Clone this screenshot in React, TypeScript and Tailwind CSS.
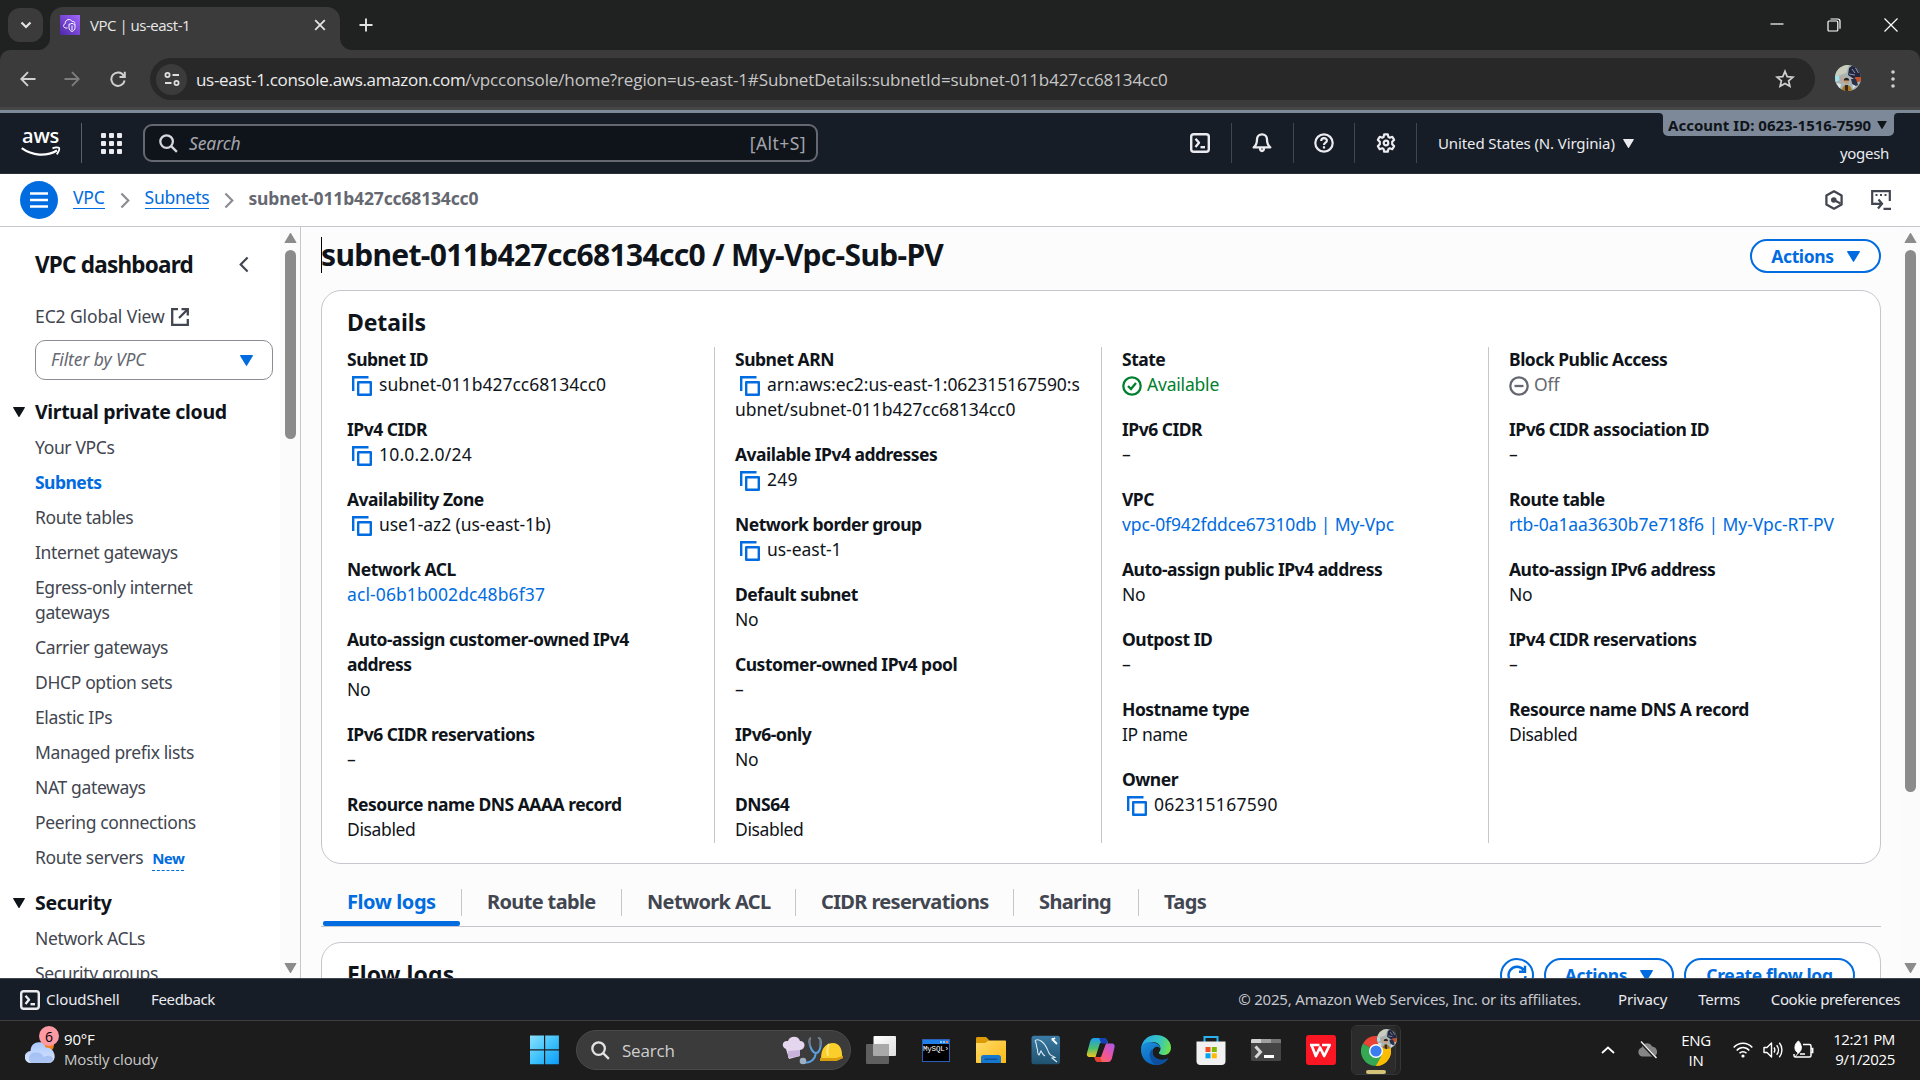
import React from "react";

const EMBER = "font-['Noto_Sans','Open_Sans',sans-serif]";
const SEGOE = "font-['Open_Sans','Noto_Sans',sans-serif]";

type SvgProps = { className?: string };

/* ---------- shared glyphs ---------- */

const Triangle = ({ className = "" }: SvgProps) => (
  <svg viewBox="0 0 12 10" className={className} fill="currentColor">
    <path d="M.6 0h10.8a.5.5 0 0 1 .45.75L6.5 9.7a.6.6 0 0 1-1 0L.15.75A.5.5 0 0 1 .6 0Z" />
  </svg>
);

const CopyIcon = () => (
  <svg viewBox="0 0 20 20" className="mr-[7px] ml-[5px] inline-block size-5 align-[-5px] text-[#006ce0]" fill="none" stroke="currentColor" strokeWidth="2.4">
    <path d="M1.2 15V1.2H16.5" />
    <rect x="6.2" y="6.2" width="12.6" height="12.6" strokeLinejoin="round" />
  </svg>
);

const ShellIcon = ({ className = "" }: SvgProps) => (
  <svg viewBox="0 0 20 20" className={className} fill="none" stroke="currentColor" strokeWidth="2.4">
    <rect x="1.2" y="1.2" width="17.6" height="17.6" rx="2.5" />
    <path d="M5.5 5.8 9 9.8l-3.500 4.200" strokeLinejoin="round" />
    <path d="M10.500 14.200h4.500" />
  </svg>
);

const Chevron = ({ className = "" }: SvgProps) => (
  <svg viewBox="0 0 10 18" className={className} fill="none" stroke="currentColor" strokeWidth="2.3">
    <path d="M1.200 1.500 8.500 9l-7.300 7.500" />
  </svg>
);

const Magnifier = ({ className = "" }: SvgProps) => (
  <svg viewBox="0 0 20 20" className={className} fill="none" stroke="currentColor" strokeWidth="2.4">
    <circle cx="8" cy="8" r="6.600" />
    <path d="m12.800 12.800 6 6" />
  </svg>
);

/* ---------- browser chrome ---------- */

const VpcFavicon = () => (
  <svg viewBox="0 0 20 20" className="size-5">
    <defs>
      <linearGradient id="vpc" x1="0" y1="1" x2="1" y2="0">
        <stop offset="0" stopColor="#4d27a8" />
        <stop offset="1" stopColor="#a166ff" />
      </linearGradient>
    </defs>
    <rect width="20" height="20" fill="url(#vpc)" />
    <path d="M7.500 13H5.700C3.300 12.700 2.700 9.600 5.200 8.800 4.800 4.300 10.800 3 12.200 6.500c1.600-.5 2.600.5 2.700 1.800" fill="none" stroke="#fff" strokeWidth="1" />
    <path d="M9 9.200c1.300 0 2.300-.4 3-1 .700.6 1.700 1 3 1v3.300c0 2-1.200 3.200-3 4-1.800-.8-3-2-3-4ZM12 10.500v4.500" fill="none" stroke="#fff" strokeWidth="1" />
  </svg>
);

const Avatar = ({ className = "" }: SvgProps) => (
  <svg viewBox="0 0 26 26" className={className}>
    <defs>
      <clipPath id="av"><circle cx="13" cy="13" r="13" /></clipPath>
    </defs>
    <g clipPath="url(#av)">
      <rect width="26" height="26" fill="#a9b4b4" />
      <path d="M0 0h14l-3 8-11 4Z" fill="#c9cdbd" />
      <path d="M0 11h4l1 4-5 2Z" fill="#9fe3ee" />
      <path d="M4 13l4-3 2 6-4 3Z" fill="#b9a9a0" />
      <path d="M14 3l4-3 8 4v8l-7 2-6-4Z" fill="#23263f" />
      <path d="M17 4l3 4M20.500 3l3 5M14 9l6 1" stroke="#8d96ad" strokeWidth="1" />
      <path d="M20 12h6v4l-5 2Z" fill="#c8502a" />
      <path d="M16 14l5 0 2 6-5 2Z" fill="#28304a" />
      <circle cx="11.500" cy="16" r="2.600" fill="#c99b70" />
      <path d="M8.800 15.500c0-3.600 5.400-3.600 5.400 0Z" fill="#2b2320" />
      <path d="M7 26c0-8 9-8 10 0Z" fill="#a87520" />
      <path d="M10 20h3v6h-3Z" fill="#3a2a1c" />
      <path d="M1 18l5 1-1 5Z" fill="#dfe6ea" />
      <path d="M17 19l4 2-3 3Z" fill="#d9dde0" />
    </g>
  </svg>
);

const TabStrip = () => (
  <div className="flex h-[50px] items-start bg-[#202221] text-[#e3e3e3]">
    <div className="mt-2 ml-2 grid h-[34px] w-[35px] place-items-center rounded-[12px] bg-[#3b3b3b]">
      <svg viewBox="0 0 12 8" className="h-2 w-3" fill="none" stroke="currentColor" strokeWidth="2.200"><path d="m1.500 1.500 4.500 4.500 4.500-4.500" /></svg>
    </div>
    <div className="relative mt-[7px] ml-[7px] flex h-[43px] w-[290px] items-start rounded-t-[13px] bg-[#3b3b3b] pt-2 pl-[10px]">
      <svg viewBox="0 0 12 12" className="absolute bottom-0 -left-3 size-3" fill="#3b3b3b"><path d="M12 0v12H0A12 12 0 0 0 12 0Z" /></svg>
      <svg viewBox="0 0 12 12" className="absolute -right-3 bottom-0 size-3" fill="#3b3b3b"><path d="M0 0v12h12A12 12 0 0 1 0 0Z" /></svg>
      <VpcFavicon />
      <span className="ml-[10px] w-[215px] text-[15px] leading-5 tracking-[-0.48px] text-[#e8e8e8]">VPC | us-east-1</span>
      <svg viewBox="0 0 12 12" className="mt-1 ml-[9px] size-3" fill="none" stroke="currentColor" strokeWidth="1.800"><path d="m1.200 1.200 9.600 9.600M10.800 1.200l-9.600 9.600" /></svg>
    </div>
    <svg viewBox="0 0 14 14" className="mt-[18px] ml-[19px] size-[14px]" fill="none" stroke="currentColor" strokeWidth="1.900"><path d="M7 .5v13M.5 7h13" /></svg>
    <div className="mr-[22px] ml-auto flex gap-[43px] pt-[18px] text-white">
      <svg viewBox="0 0 14 14" className="size-[14px]" fill="none" stroke="currentColor" strokeWidth="1.200"><path d="M.5 6h13" /></svg>
      <svg viewBox="0 0 14 14" className="size-[14px]" fill="none" stroke="currentColor" strokeWidth="1.200"><rect x="1" y="3" width="9.800" height="10" rx="1" /><path d="M3.500 1h7.300a2.200 2.200 0 0 1 2.200 2.200v7.500" /></svg>
      <svg viewBox="0 0 14 14" className="size-[14px]" fill="none" stroke="currentColor" strokeWidth="1.200"><path d="m.5.500 13 13M13.500.500l-13 13" /></svg>
    </div>
  </div>
);

const Toolbar = () => (
  <div className="bg-[#202221]">
    <div className="flex h-[57px] items-start rounded-t-[10px] bg-[#3b3b3b] pt-2 text-[#d0d0d0]">
      <svg viewBox="0 0 16 16" className="mt-[13px] ml-5 size-4" fill="none" stroke="currentColor" strokeWidth="1.900"><path d="M15.500 8H1.500M8 1.200 1.300 8 8 14.800" /></svg>
      <svg viewBox="0 0 16 16" className="mt-[13px] ml-7 size-4 text-[#7d7d7d]" fill="none" stroke="currentColor" strokeWidth="1.900"><path d="M.5 8h14M8 1.200 14.700 8 8 14.800" /></svg>
      <svg viewBox="0 0 16 16" className="mt-[13px] ml-[30px] size-4" fill="none" stroke="currentColor" strokeWidth="2"><path d="M13.700 4.600A6.700 6.700 0 1 0 14.600 9.500M14.800.800v5.200H9.500" /></svg>
      <div className="ml-6 flex h-[42px] w-[1665px] items-center rounded-full bg-[#282828]">
        <div className="ml-[6px] grid size-[31px] place-items-center rounded-full bg-[#3b3b3b] text-[#dedede]">
          <svg viewBox="0 0 16 14" className="h-[14px] w-4" fill="none" stroke="currentColor" strokeWidth="1.800"><circle cx="3.500" cy="3" r="2.100" /><path d="M8.500 3h6.500M1 11h6.500" /><circle cx="12.500" cy="11" r="2.100" /></svg>
        </div>
        <span className="mt-px ml-[9px] flex-1 text-[17px] leading-6 tracking-[-0.12px] whitespace-nowrap text-[#c7c7c7]">
          <span className="tracking-[-0.31px] text-[#ececec]">us-east-1.console.aws.amazon.com</span>/vpcconsole/home?region=us-east-1#SubnetDetails:subnetId=subnet-011b427cc68134cc0
        </span>
        <svg viewBox="0 0 20 20" className="mr-5 size-5" fill="none" stroke="currentColor" strokeWidth="1.700"><path d="m10 2.300 2.200 5.300 5.800.5-4.400 3.700 1.300 5.500L10 14.400l-4.900 2.900 1.300-5.500L2 8.100l5.800-.5Z" /></svg>
      </div>
      <Avatar className="mt-[7px] ml-5 size-[26px]" />
      <svg viewBox="0 0 4 18" className="mt-3 ml-[30px] h-[18px] w-1" fill="currentColor"><circle cx="2" cy="2" r="1.800" /><circle cx="2" cy="9" r="1.800" /><circle cx="2" cy="16" r="1.800" /></svg>
    </div>
    <div className="h-[3px] bg-[#474747]" />
  </div>
);

/* ---------- AWS header ---------- */

const Divider = () => <div className="h-10 w-px bg-[#424650]" />;

const AwsHeader = () => (
  <div className="relative flex h-16 items-center border-t-[3px] border-b border-t-[#7d8998] border-b-[#2a2f3c] bg-[#161d26] text-[#ebebf0]">
    <div className="mt-px ml-[21px] flex w-10 flex-col text-white">
      <span className="-mt-px mb-px ml-px font-['Open_Sans',sans-serif] text-[20px] leading-[15px] font-semibold tracking-[-0.2px]">aws</span>
      <svg viewBox="0 0 40 12" className="mt-[2px] h-3 w-10" fill="none" stroke="currentColor" strokeWidth="2.200"><path d="M.7 2.200c10.500 7.600 24.500 8.600 35.300 2.300" /><path d="M31.500 2.400c3-1.500 6-1.200 6.600-.5.600.9-.200 4-2.400 6.400" strokeWidth="1.800" /></svg>
    </div>
    <div className="ml-5 h-10 w-px bg-[#5b5f69]" />
    <div className="ml-[19px] grid grid-cols-3 gap-[3px]">
      {Array.from({ length: 9 }, (_, i) => <i key={i} className="size-[5px] rounded-[1px] bg-[#ebebf0]" />)}
    </div>
    <div className="ml-[21px] flex h-[38px] w-[675px] items-center rounded-[9px] border-2 border-[#656871] bg-[#0f141a] pr-[10px] pl-[14px]">
      <Magnifier className="size-[19px] text-[#d6d6dc]" />
      <span className="ml-[11px] flex-1 text-[17.5px] tracking-[-0.1px] text-[#a4a4ad] italic">Search</span>
      <span className="text-[17.5px] tracking-[0.45px] text-[#a4a4ad]">[Alt+S]</span>
    </div>
    <div className="ml-auto flex w-[730px] items-center">
      <ShellIcon className="size-5" />
      <div className="ml-[21px]"><Divider /></div>
      <svg viewBox="0 0 20 20" className="ml-5 size-5" fill="none" stroke="currentColor" strokeWidth="2.300"><path d="M10 1.300c-3 0-5 2.300-5 5.200 0 4-1.300 6.200-3.300 7.900h16.600C16.300 12.700 15 10.500 15 6.500c0-2.900-2-5.200-5-5.200ZM8 14.800c0 4.300 4 4.300 4 0" strokeLinejoin="round" /></svg>
      <div className="ml-[21px]"><Divider /></div>
      <svg viewBox="0 0 20 20" className="ml-5 size-5" fill="none" stroke="currentColor" strokeWidth="2.200"><circle cx="10" cy="10" r="8.700" /><path d="M7.200 8c0-3.800 5.800-3.700 5.700-.300-.100 2-2.900 2-2.900 4.200M10 13.300v2.200" /></svg>
      <div className="ml-5"><Divider /></div>
      <svg viewBox="0 0 20 20" className="ml-[21px] size-5" fill="none" stroke="currentColor" strokeWidth="2.200"><path d="M8.200 1.300h3.600l.6 2.600 1.300.8 2.600-.9 1.800 3.100-1.900 1.900v2.400l1.900 1.900-1.800 3.100-2.600-.9-1.300.8-.6 2.600H8.200l-.6-2.600-1.300-.8-2.600.9-1.800-3.100 1.900-1.900V8.800L1.900 6.900l1.800-3.100 2.600.9 1.300-.8Z" strokeLinejoin="round" /><circle cx="10" cy="10" r="2.300" /></svg>
      <div className="ml-5"><Divider /></div>
      <span className="ml-[21px] w-[177px] text-[15px] tracking-[-0.12px] whitespace-nowrap">United States (N. Virginia)</span>
      <Triangle className="ml-2 h-[9px] w-[11px]" />
    </div>
    <div className="absolute top-0 right-[26px] flex h-[23px] w-[231px] items-center rounded-b-[5px] bg-[#7d8998] pl-[5px] text-[#0f141a]">
      <svg viewBox="0 0 4 4" className="absolute top-0 -left-1 size-1" fill="#7d8998"><path d="M0 0h4v4A4 4 0 0 0 0 0Z" /></svg>
      <svg viewBox="0 0 4 4" className="absolute top-0 -right-1 size-1" fill="#7d8998"><path d="M4 0H0v4A4 4 0 0 1 4 0Z" /></svg>
      <span className="w-[204px] text-[15px] leading-5 font-bold tracking-[0.02px] whitespace-nowrap">Account ID: 0623-1516-7590</span>
      <Triangle className="ml-[5px] h-2 w-[10px]" />
    </div>
    <span className="absolute top-[30px] right-[31px] text-[15px] leading-5 tracking-[-0.3px]">yogesh</span>
  </div>
);

const BreadcrumbBar = () => (
  <div className="flex h-[53px] items-center border-b border-[#c6c6cd] bg-white text-[17.5px] leading-5">
    <div className="ml-5 grid size-[38px] place-items-center rounded-full bg-[#006ce0] text-white">
      <svg viewBox="0 0 18 16" className="h-4 w-[18px]" fill="none" stroke="currentColor" strokeWidth="2.400"><path d="M0 1.500h18M0 8h18M0 14.500h18" /></svg>
    </div>
    <span className="mb-[3px] ml-[15px] border-b border-[#006ce0] pb-px leading-[19px] tracking-[-0.2px] text-[#006ce0]">VPC</span>
    <Chevron className="ml-[15px] h-[17px] w-[10px] text-[#8c8c94]" />
    <span className="mb-[3px] ml-[15px] border-b border-[#006ce0] pb-px leading-[19px] tracking-[-0.25px] text-[#006ce0]">Subnets</span>
    <Chevron className="ml-[15px] h-[17px] w-[10px] text-[#8c8c94]" />
    <span className="mb-1 ml-[14px] font-bold tracking-[-0.15px] text-[#656871]">subnet-011b427cc68134cc0</span>
    <svg viewBox="0 0 20 20" className="ml-auto size-5 text-[#424650]" fill="none" stroke="currentColor" strokeWidth="2.300"><path d="m10 1.300 7.600 4.300v8.800L10 18.700l-7.600-4.300V5.600Z" strokeLinejoin="round" /><path d="m10 10 6.500 3.500" strokeWidth="2" /><circle cx="9.800" cy="10" r="2.800" fill="currentColor" stroke="none" /></svg>
    <svg viewBox="0 0 20 20" className="mr-[29px] ml-[27px] size-5 text-[#424650]" fill="none" stroke="currentColor" strokeWidth="2.200"><path d="M5.500 13.800H1.200V1.200h17.600V11" /><path d="M4.500 5h2M9 5h2M13.500 5h2" /><path d="M3.500 13.800h7M7.500 9.500l3.500 4.300L7 18.500M12.500 18.800H20" /></svg>
  </div>
);

/* ---------- page body ---------- */

const Scrollbar = ({ thumb }: { thumb: string }) => (
  <div className="flex h-full w-5 shrink-0 flex-col items-center bg-[#fbfbfb] pt-[6px] pb-[5px] text-[#8b8b8b]">
    <Triangle className="h-[10px] w-[13px] rotate-180" />
    <div className={"mt-[7px] w-[11px] rounded-full bg-[#8b8b8b] " + thumb} />
    <Triangle className="mt-auto h-[10px] w-[13px]" />
  </div>
);

const vpcLinks = ["Your VPCs", "Subnets", "Route tables", "Internet gateways", "Egress-only internet gateways", "Carrier gateways", "DHCP option sets", "Elastic IPs", "Managed prefix lists", "NAT gateways", "Peering connections", "Route servers"];

const NavSection = ({ title, links, className = "" }: { title: string; links: string[]; className?: string }) => (
  <section className={className}>
    <div className="flex items-center">
      <Triangle className="ml-[13px] h-[10px] w-3 text-[#0f141a]" />
      <h3 className="ml-[10px] text-[19.5px] leading-[25px] font-bold tracking-[-0.34px] text-[#0f141a]">{title}</h3>
    </div>
    <ul className="mt-[11px] ml-[35px] flex w-[185px] flex-col gap-[10px]">
      {links.map((l) => (
        <li key={l} className={l === "Subnets" ? "font-bold tracking-[-0.55px] text-[#006ce0]" : "text-[#424650]"}>
          {l}
          {l === "Route servers" && <span className="ml-[9px] border-b border-dashed border-[#006ce0] pb-[2px] text-[15px] font-bold tracking-[-0.55px] text-[#006ce0]">New</span>}
        </li>
      ))}
    </ul>
  </section>
);

const Sidebar = () => (
  <aside className="flex w-[301px] shrink-0 border-r border-[#c6c6cd] bg-white text-[17.5px] leading-[25px] tracking-[-0.36px]">
    <div className="h-full w-[281px] overflow-hidden">
      <div className="mt-6 flex items-center pl-[35px]">
        <h2 className="w-[204px] text-[22.5px] leading-[27px] font-bold tracking-[-0.78px] text-[#0f141a]">VPC dashboard</h2>
        <Chevron className="h-[17px] w-[10px] rotate-180 text-[#424650]" />
      </div>
      <div className="mt-[26px] ml-[35px] flex items-center tracking-[-0.1px] text-[#424650]">
        EC2 Global View
        <svg viewBox="0 0 18 18" className="mt-px ml-[6px] size-[18px]" fill="none" stroke="currentColor" strokeWidth="2.300"><path d="M7 1.200H1.200v15.600h15.600V11M10.500 1.200h6.300v6.300M16.500 1.500 8 10" /></svg>
      </div>
      <div className="mt-[11px] ml-[35px] flex h-10 w-[238px] items-center rounded-[10px] border border-[#8c8c94] pr-[19px] pl-[15px]">
        <span className="-mt-px flex-1 tracking-[-0.1px] text-[#656871] italic">Filter by VPC</span>
        <Triangle className="h-[11px] w-[13px] text-[#006ce0]" />
      </div>
      <NavSection className="mt-[19px]" title="Virtual private cloud" links={vpcLinks} />
      <NavSection className="mt-[19px]" title="Security" links={["Network ACLs", "Security groups"]} />
    </div>
    <Scrollbar thumb="h-[189px]" />
  </aside>
);

type Item = { label: string; value: string; kind?: "copy" | "link" | "ok" | "off"; track?: string };

const columns: Item[][] = [
  [
    { label: "Subnet ID", value: "subnet-011b427cc68134cc0", kind: "copy", track: "tracking-[0px]" },
    { label: "IPv4 CIDR", value: "10.0.2.0/24", kind: "copy", track: "tracking-[0.2px]" },
    { label: "Availability Zone", value: "use1-az2 (us-east-1b)", kind: "copy", track: "tracking-[-0.08px]" },
    { label: "Network ACL", value: "acl-06b1b002dc48b6f37", kind: "link", track: "tracking-[0.1px]" },
    { label: "Auto-assign customer-owned IPv4 address", value: "No" },
    { label: "IPv6 CIDR reservations", value: "–" },
    { label: "Resource name DNS AAAA record", value: "Disabled" },
  ],
  [
    { label: "Subnet ARN", value: "arn:aws:ec2:us-east-1:062315167590:subnet/subnet-011b427cc68134cc0", kind: "copy", track: "tracking-[-0.06px]" },
    { label: "Available IPv4 addresses", value: "249", kind: "copy", track: "tracking-[0.25px]" },
    { label: "Network border group", value: "us-east-1", kind: "copy", track: "tracking-[-0.04px]" },
    { label: "Default subnet", value: "No" },
    { label: "Customer-owned IPv4 pool", value: "–" },
    { label: "IPv6-only", value: "No" },
    { label: "DNS64", value: "Disabled" },
  ],
  [
    { label: "State", value: "Available", kind: "ok", track: "tracking-[-0.2px]" },
    { label: "IPv6 CIDR", value: "–" },
    { label: "VPC", value: "vpc-0f942fddce67310db | My-Vpc", kind: "link", track: "tracking-[-0.13px]" },
    { label: "Auto-assign public IPv4 address", value: "No" },
    { label: "Outpost ID", value: "–" },
    { label: "Hostname type", value: "IP name" },
    { label: "Owner", value: "062315167590", kind: "copy", track: "tracking-[0.3px]" },
  ],
  [
    { label: "Block Public Access", value: "Off", kind: "off", track: "tracking-[-0.1px]" },
    { label: "IPv6 CIDR association ID", value: "–" },
    { label: "Route table", value: "rtb-0a1aa3630b7e718f6 | My-Vpc-RT-PV", kind: "link", track: "tracking-[-0.06px]" },
    { label: "Auto-assign IPv6 address", value: "No" },
    { label: "IPv4 CIDR reservations", value: "–" },
    { label: "Resource name DNS A record", value: "Disabled" },
  ],
];

const columnPadding = ["pr-10", "border-l pl-5 pr-5", "border-l pl-5 pr-5", "border-l pl-5"];

const valueColor = { copy: "text-[#0f141a]", link: "text-[#006ce0]", ok: "text-[#00802f]", off: "text-[#656871]" };

const Detail = ({ label, value, kind, track = "" }: Item) => (
  <div>
    <div className="font-bold tracking-[-0.5px]">{label}</div>
    <div className={"break-all " + track + " " + (kind ? valueColor[kind] : "")}>
      {kind === "copy" && <CopyIcon />}
      {kind === "ok" && (
        <svg viewBox="0 0 20 20" className="mr-[5px] inline-block size-5 align-[-5px]" fill="none" stroke="currentColor" strokeWidth="2.300"><circle cx="10" cy="10" r="8.700" /><path d="m6 10 3 3 5-6" /></svg>
      )}
      {kind === "off" && (
        <svg viewBox="0 0 20 20" className="mr-[5px] inline-block size-5 align-[-5px]" fill="none" stroke="currentColor" strokeWidth="2.300"><circle cx="10" cy="10" r="8.700" /><path d="M5.500 10h9" /></svg>
      )}
      {value}
    </div>
  </div>
);

const Pill = ({ children, className = "" }: { children: React.ReactNode; className?: string }) => (
  <div className={"flex h-[34px] items-center justify-center gap-[13px] rounded-[17px] border-2 border-[#006ce0] bg-white text-[17.5px] font-bold tracking-[-0.35px] text-[#006ce0] " + className}>{children}</div>
);

const tabs = [
  { name: "Flow logs", w: "w-[141px]" },
  { name: "Route table", w: "w-[160px]" },
  { name: "Network ACL", w: "w-[174px]" },
  { name: "CIDR reservations", w: "w-[218px]" },
  { name: "Sharing", w: "w-[125px]" },
  { name: "Tags", w: "w-[96px]" },
];

const Main = () => (
  <main className="h-full w-[1599px] overflow-hidden bg-[#fcfcfd] pr-[19px] pl-5 text-[#0f141a]">
    <div className="flex h-[63px] items-start">
      <h1 className="mt-[10px] border-l border-black indent-[-1px] text-[30px] leading-9 font-bold tracking-[-0.68px] whitespace-nowrap">subnet-011b427cc68134cc0 / My-Vpc-Sub-PV</h1>
      <Pill className="mt-3 ml-auto w-[131px]">Actions <Triangle className="h-[11px] w-[13px]" /></Pill>
    </div>
    <section className="h-[574px] rounded-[20px] border border-[#c6c6cd] bg-white px-[25px] pt-[17px]">
      <h2 className="text-[23px] leading-7 font-bold tracking-[-0.1px]">Details</h2>
      <div className="mt-[11px] grid h-[496px] grid-cols-[367px_387px_387px_1fr] text-[17.5px] leading-[25px] tracking-[-0.36px]">
        {columns.map((items, i) => (
          <div key={i} className={"flex flex-col gap-5 border-[#c6c6cd] " + columnPadding[i]}>
            {items.map((it) => <Detail key={it.label} {...it} />)}
          </div>
        ))}
      </div>
    </section>
    <div className="flex h-[63px] items-start border-b border-[#c6c6cd] pt-[25px]">
      {tabs.map((t, i) => (
        <div key={t.name} className={"relative flex h-[27px] items-center pb-px text-[20px] font-bold whitespace-nowrap " + t.w + " " + (i < 5 ? "border-r border-[#c6c6cd] " : "") + (i === 0 ? "pl-[26px] tracking-[-0.42px] text-[#006ce0]" : "pl-[25px] tracking-[-0.64px] text-[#424650]")}>
          {t.name}
          {i === 0 && <span className="absolute top-[32px] left-[2px] h-[5px] w-[137px] rounded-[2px] bg-[#006ce0]" />}
        </div>
      ))}
    </div>
    <section className="mt-[15px] flex h-[120px] rounded-[20px] border border-[#c6c6cd] bg-white px-[25px]">
      <h2 className="mt-[17px] flex-1 text-[23px] leading-7 font-bold tracking-[0.1px]">Flow logs</h2>
      <div className="mt-[15px] flex gap-[10px]">
        <Pill className="w-[34px]">
          <svg viewBox="0 0 20 20" className="size-5 shrink-0" fill="none" stroke="currentColor" strokeWidth="2.400"><path d="M18.500 11a8.500 8.500 0 1 1-1.800-6M18 .8v6h-6" /></svg>
        </Pill>
        <Pill className="w-[130px]">Actions <Triangle className="h-[11px] w-[13px]" /></Pill>
        <Pill className="w-[171px]">Create flow log</Pill>
      </div>
    </section>
  </main>
);

const Footer = () => (
  <div className="flex h-[42px] items-center border-t border-[#424650] bg-[#161d26] pr-5 pl-5 text-[15px] tracking-[-0.35px] text-[#ebebf0]">
    <ShellIcon className="size-5" />
    <span className="ml-[6px] w-[105px] tracking-[-0.1px]">CloudShell</span>
    <span>Feedback</span>
    <span className="mr-[37px] ml-auto tracking-[-0.2px] text-[#c6c6cd]">© 2025, Amazon Web Services, Inc. or its affiliates.</span>
    <span className="mr-[31px] tracking-[-0.1px]">Privacy</span>
    <span className="mr-[31px]">Terms</span>
    <span>Cookie preferences</span>
  </div>
);

/* ---------- taskbar ---------- */

const Weather = () => (
  <div className="relative ml-[25px] h-[30px] w-[39px]">
    <svg viewBox="0 0 32 30" className="h-[30px] w-8">
      <defs><linearGradient id="cl" x1="0" y1="0" x2="0" y2="1"><stop offset="0" stopColor="#a9c8ff" /><stop offset="1" stopColor="#dbe6fb" /></linearGradient></defs>
      <circle cx="22" cy="10" r="7" fill="#f58220" />
      <path d="M6 28a6 6 0 0 1-.5-12C6 5 19 5 20.500 12.500 31 12 33 27 24 28Z" fill="url(#cl)" />
      <path d="M6 28a6 6 0 0 1 4-10.500c6-.5 8 3 9 4.500 5-3 10 0 9 3-.8 2-2 3-4 3Z" fill="#8fb0ee" opacity=".6" />
    </svg>
    <div className="absolute -top-[9px] left-[14px] grid size-5 place-items-center rounded-full bg-[#ff99a4] text-[14px] text-black">6</div>
  </div>
);

const SearchArt = () => (
  <svg viewBox="0 0 62 30" className="h-[30px] w-[62px]">
    <path d="M4 14C-1 12 0 5 6 6c2-6 11-5 12 0 6 0 6 8 0 9v6l-11 3Z" fill="#e4d6ee" />
    <path d="M6 16v7l12-2v-6" fill="#c9b3da" />
    <path d="M29 3c-4 1 0 15 5 15S41 2 36 3M34 18c-1 6-5 10-12 10" fill="none" stroke="#5aa0dd" strokeWidth="2" />
    <path d="M29 3c-3 0-1 7-.5 8M36 3c3 0 2.500 5 2 8" fill="none" stroke="#777" strokeWidth="1.600" />
    <circle cx="21" cy="26" r="3.300" fill="#9db0c4" />
    <path d="M39 24c0-11 5-16 12-16 6 0 9 5 9 12l1 3-7 3H38Z" fill="#fbcf2b" />
    <path d="M38 23h16l7-2v2l-7 3H38Z" fill="#d99d0d" />
    <path d="M47 9c-2 4-2 8-1 12" stroke="#ffe680" strokeWidth="2" fill="none" />
  </svg>
);

const appIcon = "h-[30px] w-[30px] shrink-0";

const WindowsLogo = () => (
  <svg viewBox="0 0 30 30" className={appIcon}>
    <defs><linearGradient id="win" x1="0" y1="0" x2="1" y2="1"><stop offset="0" stopColor="#8be0fc" /><stop offset=".5" stopColor="#41c3fb" /><stop offset="1" stopColor="#0a9bf8" /></linearGradient></defs>
    <path d="M0 .5H14v13.700H0ZM15.200.500h13.700v13.700H15.200ZM0 15.500H14v13.700H0ZM15.200 15.500h13.700v13.700H15.200Z" fill="url(#win)" />
  </svg>
);

const TaskView = () => (
  <svg viewBox="0 0 30 30" className={appIcon}>
    <defs><linearGradient id="tv" x1="0" y1="0" x2="1" y2="1"><stop offset="0" stopColor="#fff" /><stop offset="1" stopColor="#ddd" /></linearGradient></defs>
    <rect x="0" y="9" width="23" height="20" rx="1" fill="#5f5f5f" />
    <rect x="7.500" y="1" width="22.500" height="20" rx="1" fill="url(#tv)" />
    <path d="M7.500 9H23v12H7.500Z" fill="#a9a9a9" />
  </svg>
);

const MySqlShell = () => (
  <div className="h-[23px] w-[28px] overflow-hidden border border-[#2b5fb8] bg-black">
    <div className="flex h-1 justify-end gap-px bg-[#1f7fe8] pr-px">
      <i className="mt-px size-[2px] bg-[#8cc4ff]" /><i className="mt-px size-[2px] bg-[#8cc4ff]" /><i className="mt-px size-[2px] bg-[#ff7a4d]" />
    </div>
    <div className="font-['Liberation_Mono',monospace] text-[7.5px] leading-[11px] tracking-[-0.2px] text-white">MySQL›</div>
  </div>
);

const Folder = () => (
  <svg viewBox="0 0 30 30" className={appIcon}>
    <defs><linearGradient id="fo" x1="0" y1="0" x2="1" y2="1"><stop offset="0" stopColor="#ffdb6b" /><stop offset="1" stopColor="#fcb913" /></linearGradient></defs>
    <path d="M0 3.500C0 2.500.5 2 1.500 2h8.500l3 3v6H0Z" fill="#dd9a07" />
    <path d="M0 8h9l4-2.500h16c.7 0 1 .3 1 1V28H1c-.7 0-1-.5-1-1Z" fill="url(#fo)" />
    <path d="M5 28v-5.500c0-1.500 1-2.500 2.500-2.500h15c1.500 0 2.500 1 2.500 2.500V28Z" fill="#1478cf" />
    <path d="M8.500 24.200h13" stroke="#0b4f93" strokeWidth="1.400" />
  </svg>
);

const Workbench = () => (
  <svg viewBox="0 0 30 30" className={appIcon}>
    <defs><linearGradient id="wb" x1="0" y1="0" x2="0" y2="1"><stop offset="0" stopColor="#3b7ba5" /><stop offset="1" stopColor="#1f526f" /></linearGradient></defs>
    <rect x=".5" y=".8" width="28.500" height="28.500" rx="2.500" fill="url(#wb)" />
    <path d="M4 6c1-2 4-1.500 6 0 5 3 6 8 8 12 1 3 4 3 6 4.500l-3 .5 5 4M4 6c2 2 1 6 2.500 8.500C7 17 6 19 8 20l2-4c1 2 2 4 4 5" fill="none" stroke="#dcebf3" strokeWidth="1.100" />
    <path d="m21 4 5 5M21.500 3v2.500M24 3l-3 2" stroke="#fff" strokeWidth="1.800" />
  </svg>
);

const Copilot = () => (
  <svg viewBox="0 0 30 30" className={appIcon}>
    <defs>
      <linearGradient id="c1" x1="0" y1="0" x2="0" y2="1"><stop offset="0" stopColor="#1b9df0" /><stop offset=".55" stopColor="#4fbf6b" /><stop offset="1" stopColor="#f2c51e" /></linearGradient>
      <linearGradient id="c2" x1="0" y1="1" x2="1" y2="0"><stop offset="0" stopColor="#ff6b3d" /><stop offset=".5" stopColor="#f0559a" /><stop offset="1" stopColor="#a659f0" /></linearGradient>
    </defs>
    <path d="M8 3h9c3 0 4 1.500 5 5H14L9.500 22H4c-3 0-3.500-2-3-4L4 7c.7-2.500 2-4 4-4Z" fill="url(#c1)" />
    <path d="M13 3h4.500c2.500 0 3.500 2 4.500 5.500h-6C14.500 8.500 14 4 13 3Z" fill="#1740b8" />
    <path d="M22 27h-9c-3 0-4-1.500-4.500-5H15l5-13.500h5.500c3 0 3.500 2 3 4L26 23c-.7 2.500-2 4-4 4Z" fill="url(#c2)" />
    <path d="M8.500 22H14l2 5h-3c-3 0-4-2-4.500-5Z" fill="#e8402f" />
  </svg>
);

const Edge = () => (
  <svg viewBox="0 0 30 30" className={appIcon}>
    <defs>
      <linearGradient id="e1" x1="0" y1=".3" x2="1" y2=".5"><stop offset="0" stopColor="#2aa7e8" /><stop offset=".6" stopColor="#36c6c0" /><stop offset="1" stopColor="#6de24a" /></linearGradient>
      <linearGradient id="e2" x1="0" y1="0" x2=".6" y2="1"><stop offset="0" stopColor="#1b91dd" /><stop offset="1" stopColor="#0a5fb8" /></linearGradient>
    </defs>
    <path d="M0 14C1 5 7 0 15 0c9 0 15 6 15 12.500 0 5-3.500 7.500-7 7.500-3 0-5.500-1-5-2.500.5-1 1.500-1.800 1.500-4C19.500 9 14 6 9 7.500 4 9 1 11 0 14Z" fill="url(#e1)" />
    <path d="M0 15C0 10 4 7 9 7c6 0 10.500 3 10.500 6.500-3-3.500-8-1.500-8 4 0 6 8 10 15.500 6C24 28 20 30 15 30 6.500 30 0 23.500 0 15Z" fill="url(#e2)" />
    <path d="M12 13.500C7 17 7.500 25 14.500 30 20 30 24 28 27.500 23.300 19 27 11 22.500 11.500 17c0-1.500 0-2.500.5-3.500Z" fill="#0d4f9e" />
  </svg>
);

const Store = () => (
  <svg viewBox="0 0 30 30" className={appIcon}>
    <path d="M8.500 8V2h13v6" fill="none" stroke="#2cb0ee" strokeWidth="2" />
    <path d="M.5 6.500h29V26a4 4 0 0 1-4 4h-21a4 4 0 0 1-4-4Z" fill="#f1f1f1" />
    <path d="M9.500 12h5v5h-5Z" fill="#f25022" /><path d="M15.800 12h5v5h-5Z" fill="#7fba00" />
    <path d="M9.500 18.300h5v5h-5Z" fill="#00a4ef" /><path d="M15.800 18.300h5v5h-5Z" fill="#ffb900" />
  </svg>
);

const Terminal = () => (
  <svg viewBox="0 0 30 30" className={appIcon}>
    <rect y="4" width="30" height="22" rx="1.500" fill="#454545" />
    <path d="M0 8V5.500C0 4.500.6 4 1.500 4H10v4Z" fill="#d2d2d2" /><path d="M10 4h10v4H10Z" fill="#a0a0a0" /><path d="M20 4h8.500c1 0 1.500.5 1.500 1.500V8H20Z" fill="#767676" />
    <path d="m4.500 11.500 5 5.500-5 5.500" fill="none" stroke="#d6d6d6" strokeWidth="3" /><path d="M13 21.500h10" stroke="#fff" strokeWidth="3" />
  </svg>
);

const Wps = () => (
  <svg viewBox="0 0 30 30" className={appIcon}>
    <rect width="30" height="30" rx="3" fill="#fb1623" />
    <path d="M4 10h9.500M5.500 10l4.300 11 4.200-8.500 4.200 8.500 5.500-11H16" fill="none" stroke="#fff" strokeWidth="2.700" strokeLinejoin="round" />
  </svg>
);

const Chrome = () => (
  <svg viewBox="0 0 30 30" className="size-[30px]">
    <path d="M15 15 2 7.500A15 15 0 0 1 28 7.500Z" fill="#ea4335" />
    <path d="M15 15 28 7.500A15 15 0 0 1 15 30Z" fill="#fbbc04" />
    <path d="M15 15 2 7.500A15 15 0 0 0 15 30l6.500-11.300Z" fill="#34a853" />
    <path d="M15 8h13.300A15 15 0 0 1 15 30l6.300-11.500Z" fill="#fbbc04" />
    <circle cx="15" cy="15" r="7" fill="#fff" />
    <circle cx="15" cy="15" r="5.600" fill="#3b7df0" />
  </svg>
);

const Taskbar = () => (
  <div className={"flex h-[60px] items-center border-t border-[#3f3f3f] bg-[#1c1c1c] pb-px text-white " + SEGOE}>
    <div className="flex w-[530px] items-center">
      <Weather />
      <div className="-mt-[2px] text-[15px] leading-5 tracking-[-0.17px]"><div>90°F</div><div className="text-[#c9c9c9]">Mostly cloudy</div></div>
    </div>
    <WindowsLogo />
    <div className="ml-4 flex h-10 w-[275px] items-center rounded-full border border-[#4a4a4a] bg-[#3b3b3b] pl-[14px]">
      <Magnifier className="size-[19px] text-[#e3e3e3]" />
      <span className="mt-px ml-[12px] w-[160px] text-[17px] tracking-[-0.2px] text-[#cfcfcf]">Search</span>
      <SearchArt />
    </div>
    <div className="ml-[15px] flex items-center gap-[25px]">
      <TaskView />
      <div className="flex w-[30px] justify-center"><MySqlShell /></div>
      <Folder /><Workbench /><Copilot /><Edge /><Store /><Terminal /><Wps />
    </div>
    <div className="relative ml-[15px] grid h-[50px] w-[50px] place-items-center rounded-[6px] border border-[#363636] bg-[#242424]">
      <div className="absolute inset-y-0 left-0 w-[44px] rounded-[6px] border-r border-[#363636] bg-[#2b2b2b]" />
      <div className="relative mt-[1px]"><Chrome /></div>
      <Avatar className="absolute top-[3px] right-[3px] size-5" />
      <div className="absolute bottom-0 left-[14px] h-1 w-5 rounded-full bg-[#d3c27a]" />
    </div>
    <div className="ml-[200px] flex items-center">
      <svg viewBox="0 0 14 8" className="h-2 w-[14px]" fill="none" stroke="currentColor" strokeWidth="1.800"><path d="m1 7 6-5.500L13 7" /></svg>
      <svg viewBox="0 0 22 18" className="ml-[22px] h-[18px] w-[22px]"><path d="M5 15.500a4.500 4.500 0 0 1-.5-8.700C6 1 13 1 15 5.500c6 .3 7 9 1.500 10Z" fill="#858585" /><path d="M3.500 1 19 17.500" stroke="#1c1c1c" strokeWidth="3" /><path d="M4 .5 19.500 17" stroke="#f4f4f4" strokeWidth="1.400" /></svg>
      <div className="-mt-px ml-[21px] w-[32px] text-center text-[15px] leading-5 tracking-[-0.3px]">ENG<br />IN</div>
      <svg viewBox="0 0 20 16" className="ml-[21px] h-4 w-5" fill="none" stroke="currentColor" strokeWidth="1.500"><path d="M.7 5.500c5-5.700 13.600-5.700 18.600 0M3.700 8.500c3.500-4 9.100-4 12.600 0M6.500 11.300c2-2.200 5-2.200 7 0" /><circle cx="10" cy="14" r="1.600" fill="currentColor" stroke="none" /></svg>
      <svg viewBox="0 0 20 18" className="ml-[10px] h-[18px] w-5" fill="none" stroke="currentColor" strokeWidth="1.400"><path d="M1 6.500h3L8.500 2v14L4 11.500H1Z" strokeLinejoin="round" /><path d="M11 6.500c1 1.500 1 3.500 0 5M13.700 4.200c2.300 2.800 2.300 6.800 0 9.600M16.300 1.800c3.500 4 3.500 10.400 0 14.400" /></svg>
      <svg viewBox="0 0 22 20" className="ml-[9px] h-5 w-[22px]" fill="none" stroke="currentColor" strokeWidth="1.500"><path d="M11 4.500h6.500c1 0 1.500.5 1.500 1.500v9.500c0 1-.5 1.500-1.500 1.500H3.500C2.500 17 2 16.500 2 15.500V14M19.500 8.500h1.200v4h-1.200" /><path d="M6.500 1c3 3 4.500 9 0 12-5-2-4.500-9 0-12ZM3 17l4-5" fill="currentColor" strokeWidth="1" /><path d="M8 14h5" /></svg>
    </div>
    <div className="-mt-[3px] mr-[25px] ml-auto text-right text-[15px] leading-5 tracking-[-0.35px]">12:21 PM<br />9/1/2025</div>
  </div>
);

export default function App() {
  return (
    <div className={"flex h-[1080px] w-[1920px] flex-col overflow-hidden bg-white " + EMBER}>
      <div className={SEGOE}>
        <TabStrip />
        <Toolbar />
      </div>
      <AwsHeader />
      <BreadcrumbBar />
      <div className="flex h-[751px] overflow-hidden">
        <Sidebar />
        <Main />
        <Scrollbar thumb="h-[542px]" />
      </div>
      <Footer />
      <Taskbar />
    </div>
  );
}
